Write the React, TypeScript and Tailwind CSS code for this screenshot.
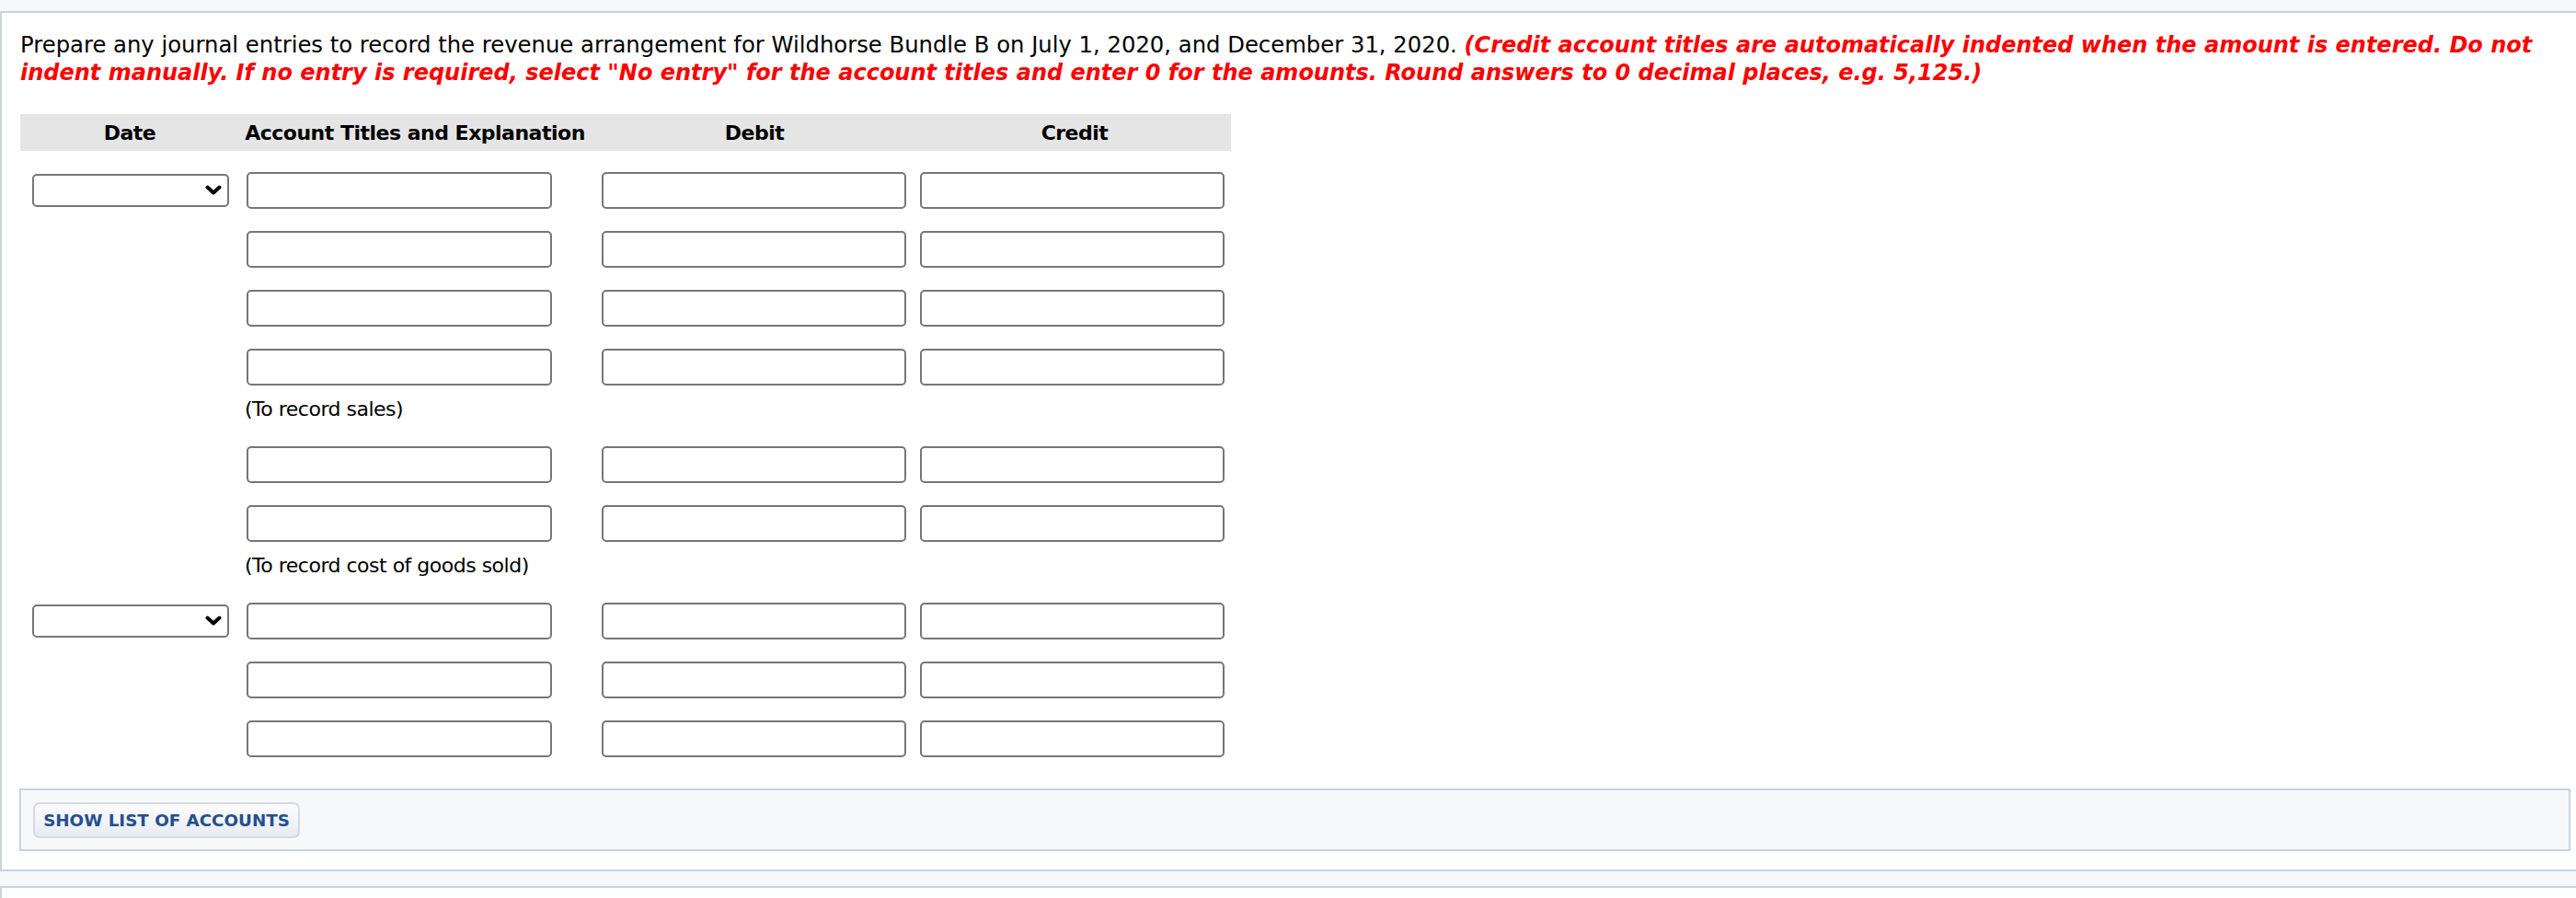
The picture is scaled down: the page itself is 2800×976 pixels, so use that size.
import React from 'react';

type Line = {
  hasDate?: boolean;
  memo?: string;
};

const lines: Line[] = [
  { hasDate: true },
  {},
  {},
  { memo: '(To record sales)' },
  {},
  { memo: '(To record cost of goods sold)' },
  { hasDate: true },
  {},
  {},
];

const gridCols = 'grid grid-cols-[238px_382px_356px_340px]';

const TextBox = ({ className = '' }: { className?: string }) => (
  <input
    type="text"
    className={`h-[40px] w-[331px] rounded-[5px] border-2 border-[#767676] bg-white px-2 outline-none ${className}`}
  />
);

const DateSelect = () => (
  <div className="relative ml-[13px] h-[36px] w-[214px]">
    <select className="h-full w-full appearance-none rounded-[5px] border-2 border-[#767676] bg-white px-2 outline-none">
      <option value=""></option>
      <option value="jul">July 1, 2020</option>
      <option value="dec">December 31, 2020</option>
    </select>
    <svg
      viewBox="0 0 18 11"
      className="pointer-events-none absolute right-[8px] top-[12px] h-[11px] w-[18px]"
    >
      <polyline
        points="2.5,2.5 9,8.5 15.5,2.5"
        fill="none"
        stroke="#000"
        strokeWidth="4"
        strokeLinecap="round"
        strokeLinejoin="round"
      />
    </svg>
  </div>
);

const App = () => {
  return (
    <div className="min-h-screen w-full overflow-hidden bg-[#f7f8fa] pt-[12px] font-['DejaVu_Sans',sans-serif] text-black">
      <div className="border-y-2 border-l-2 border-[#cad2de] bg-white pb-[20px] pl-[20px] pr-[6px] pt-[20px]">
        <p className="text-[24.3px] leading-[30px]">
          Prepare any journal entries to record the revenue arrangement for Wildhorse Bundle B on
          July 1, 2020, and December 31, 2020.{' '}
          <b className="text-[24px] italic text-[#ff0000]">
            (Credit account titles are automatically indented when the amount is entered. Do not
            indent manually. If no entry is required, select &quot;No entry&quot; for the account
            titles and enter 0 for the amounts. Round answers to 0 decimal places, e.g. 5,125.)
          </b>
        </p>

        <div className="mt-[30px] w-[1316px] text-[22px] tracking-[-0.5px]">
          <div className={`${gridCols} h-[40px] items-center bg-[#e5e5e5] font-bold`}>
            <div className="text-center">Date</div>
            <div className="text-center">Account Titles and Explanation</div>
            <div className="text-center">Debit</div>
            <div className="text-center">Credit</div>
          </div>

          {lines.map((line, i) => {
            const prev = lines[i - 1];
            const top = i === 0 ? 'mt-[23px]' : prev?.memo ? 'mt-[25px]' : 'mt-[24px]';
            return (
              <React.Fragment key={i}>
                <div className={`${gridCols} ${top} h-[40px] items-center`}>
                  <div>{line.hasDate && <DateSelect />}</div>
                  <div>
                    <TextBox className="ml-[8px] w-[332px]" />
                  </div>
                  <div>
                    <TextBox className="ml-[12px]" />
                  </div>
                  <div>
                    <TextBox className="ml-[2px]" />
                  </div>
                </div>
                {line.memo && (
                  <div className={`${gridCols} mt-[11px] leading-[30px]`}>
                    <div />
                    <div className="pl-[6px]">{line.memo}</div>
                  </div>
                )}
              </React.Fragment>
            );
          })}
        </div>

        <div className="-ml-px mt-[34px] border-2 border-[#cad2de] bg-[#f7f8fa] pb-[12px] pl-[13px] pt-[13px]">
          <button
            type="button"
            className="h-[39px] w-[290px] rounded-[7px] border-2 border-[#d3dae4] bg-gradient-to-b from-[#fdfdfe] to-[#e7ebf1] text-[18.3px] font-bold text-[#244f8e]"
          >
            SHOW LIST OF ACCOUNTS
          </button>
        </div>
      </div>

      <div className="mt-[16px] h-[40px] border-l-2 border-t-2 border-[#cad2de] bg-white" />
    </div>
  );
};

export default App;
